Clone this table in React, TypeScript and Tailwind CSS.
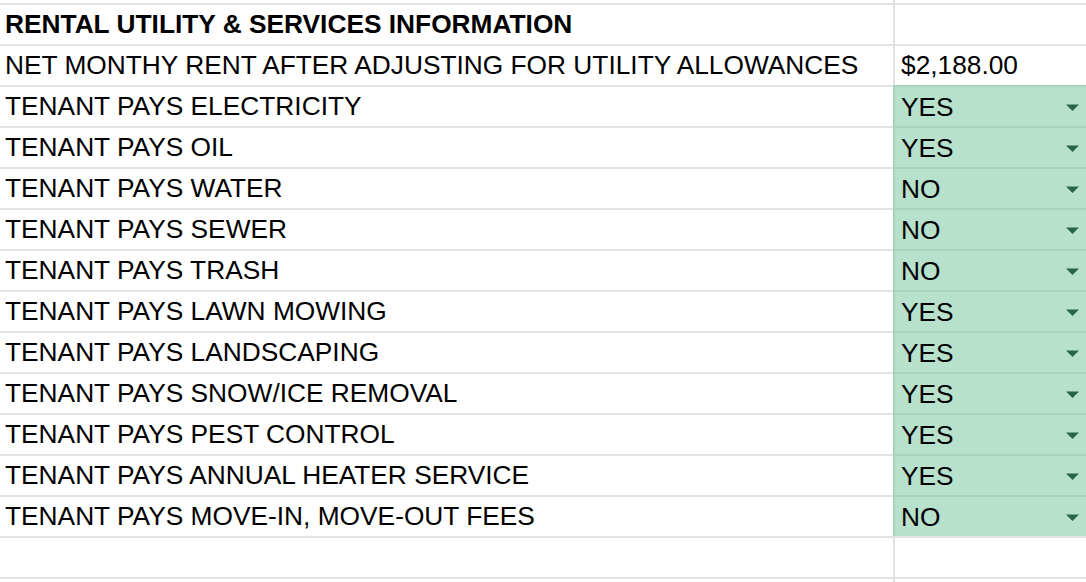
const rows: { label: string; value: "YES" | "NO" }[] = [
  { label: "TENANT PAYS ELECTRICITY", value: "YES" },
  { label: "TENANT PAYS OIL", value: "YES" },
  { label: "TENANT PAYS WATER", value: "NO" },
  { label: "TENANT PAYS SEWER", value: "NO" },
  { label: "TENANT PAYS TRASH", value: "NO" },
  { label: "TENANT PAYS LAWN MOWING", value: "YES" },
  { label: "TENANT PAYS LANDSCAPING", value: "YES" },
  { label: "TENANT PAYS SNOW/ICE REMOVAL", value: "YES" },
  { label: "TENANT PAYS PEST CONTROL", value: "YES" },
  { label: "TENANT PAYS ANNUAL HEATER SERVICE", value: "YES" },
  { label: "TENANT PAYS MOVE-IN, MOVE-OUT FEES", value: "NO" },
];

function Row({ label, value, bold, dropdown }: { label?: string; value?: string; bold?: boolean; dropdown?: boolean }) {
  return (
    <div className="flex h-[41px] border-t-2 border-[#e2e2e2]">
      <div
        className={`flex w-[895px] shrink-0 items-center border-r-2 border-[#e2e2e2] pl-[5px] ${bold ? "font-bold" : ""}`}
      >
        {label}
      </div>
      {dropdown ? (
        <div className="-mt-[2px] -ml-[2px] flex h-[41px] flex-1 items-center justify-between border-t-2 border-l-2 border-[#a8d3bf] bg-[#b7e1cd] pl-[6px] pt-[1px]">
          <span>{value}</span>
          <svg width="13" height="7" viewBox="0 0 13 7" className="mr-[7px]">
            <path d="M0 0.5h13L6.5 7z" fill="#28634a" />
          </svg>
        </div>
      ) : (
        <div className="flex flex-1 items-center pl-[6px]">{value}</div>
      )}
    </div>
  );
}

export default function App() {
  return (
    <div
      className="h-[582px] w-[1086px] overflow-hidden bg-white text-[26.3px] leading-none text-black"
      style={{ fontFamily: '"Liberation Sans", Arial, sans-serif' }}
    >
      <div className="flex h-[3px]">
        <div className="w-[895px] border-r-2 border-[#e2e2e2]" />
      </div>
      <Row label="RENTAL UTILITY & SERVICES INFORMATION" bold />
      <Row label="NET MONTHY RENT AFTER ADJUSTING FOR UTILITY ALLOWANCES" value="$2,188.00" />
      {rows.map((r) => (
        <Row key={r.label} label={r.label} value={r.value} dropdown />
      ))}
      <Row />
      <Row />
    </div>
  );
}
